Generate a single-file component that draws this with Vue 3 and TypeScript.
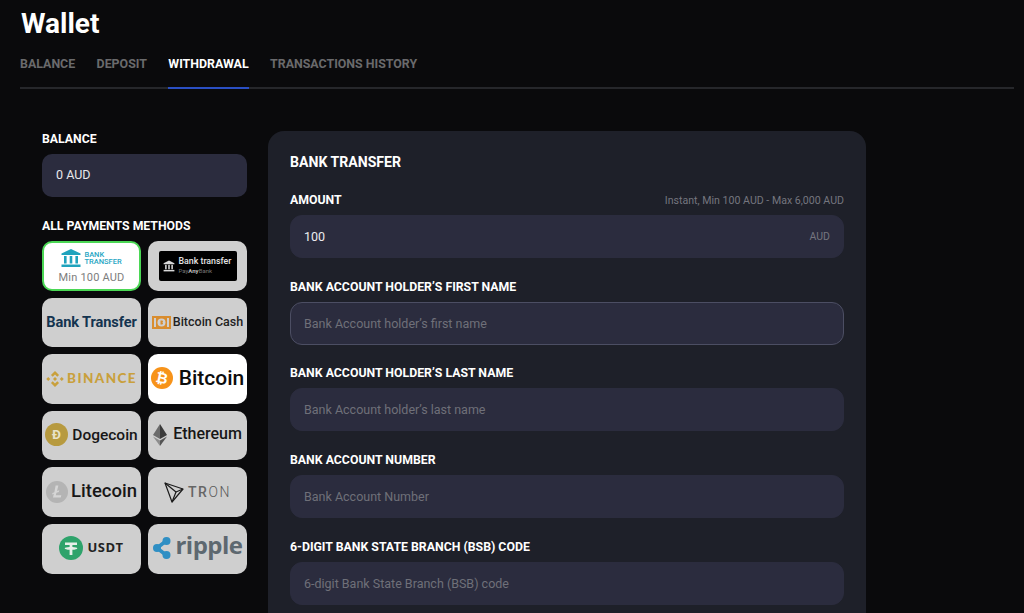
<script setup lang="ts">
const tabs = ['BALANCE', 'DEPOSIT', 'WITHDRAWAL', 'TRANSACTIONS HISTORY']
const fields = [
  { label: 'BANK ACCOUNT HOLDER’S FIRST NAME', hint: 'Bank Account holder’s first name', focus: true },
  { label: 'BANK ACCOUNT HOLDER’S LAST NAME', hint: 'Bank Account holder’s last name', focus: false },
  { label: 'BANK ACCOUNT NUMBER', hint: 'Bank Account Number', focus: false },
  { label: '6-DIGIT BANK STATE BRANCH (BSB) CODE', hint: '6-digit Bank State Branch (BSB) code', focus: false },
]
</script>

<template>
  <div class="page">
    <h1 class="title">Wallet</h1>
    <nav class="tabs">
      <span v-for="t in tabs" :key="t" class="tab" :class="{ active: t === 'WITHDRAWAL' }">{{ t }}</span>
    </nav>

    <div class="content">
      <aside class="side">
        <div class="side-label">BALANCE</div>
        <div class="balance">0 AUD</div>
        <div class="side-label methods-label">ALL PAYMENTS METHODS</div>
        <div class="grid">
          <div class="card selected">
            <div class="bt-row">
              <svg width="20" height="18" viewBox="0 0 20 18" fill="#1fa3bd">
                <path d="M10 0 19.5 4.6V6H.5V4.6Z" />
                <rect x="3" y="7" width="2.6" height="7.5" />
                <rect x="8.7" y="7" width="2.6" height="7.5" />
                <rect x="14.4" y="7" width="2.6" height="7.5" />
                <rect x=".5" y="15.5" width="19" height="2.5" />
              </svg>
              <span class="bt-text">BANK<br />TRANSFER</span>
            </div>
            <div class="min">Min 100 AUD</div>
          </div>

          <div class="card">
            <div class="pay-any">
              <svg width="12" height="12" viewBox="0 0 20 20" fill="#d8d8d8">
                <path d="M10 1 19 5.5V7H1V5.500Z" />
                <rect x="3.500" y="8" width="2.600" height="7.500" />
                <rect x="8.700" y="8" width="2.600" height="7.500" />
                <rect x="13.900" y="8" width="2.600" height="7.500" />
                <rect x="1" y="16.500" width="18" height="2.500" />
              </svg>
              <div class="pay-text">
                <div class="pay-a">Bank transfer</div>
                <div class="pay-b">Pay<b>Any</b>Bank</div>
              </div>
            </div>
          </div>

          <div class="card"><span class="bank-big">Bank Transfer</span></div>

          <div class="card row tight">
            <svg width="19" height="13" viewBox="0 0 19 13">
              <rect width="19" height="13" fill="#d98d2f" />
              <rect x="2" y="2" width="15" height="9" fill="#cfcfcf" />
              <rect x="4" y="0" width="11" height="13" fill="#d98d2f" />
              <circle cx="9.500" cy="6.500" r="4" fill="#cfcfcf" />
              <path d="M8.500 4.500h1.500a1 1 0 0 1 0 2a1 1 0 0 1 0 2H8.500Z" fill="#d98d2f" />
            </svg>
            <span class="bch">Bitcoin Cash</span>
          </div>

          <div class="card row binance">
            <svg width="18" height="18" viewBox="2 2 20 20" fill="#c9a03c">
              <path d="M12 3 16.500 7.500 14.500 9.500 12 7 9.500 9.500 7.500 7.500Z" />
              <path d="M12 21 7.500 16.500 9.500 14.500 12 17 14.500 14.500 16.500 16.500Z" />
              <path d="M4.500 9.800 6.700 12 4.500 14.200 2.300 12Z" />
              <path d="M19.500 9.800 21.700 12 19.500 14.200 17.300 12Z" />
              <path d="M12 9.800 14.200 12 12 14.200 9.800 12Z" />
            </svg>
            <span class="binance-text">BINANCE</span>
          </div>

          <div class="card white row lift">
            <svg width="22" height="22" viewBox="0 0 24 24">
              <circle cx="12" cy="12" r="12" fill="#f7931a" />
              <text x="12" y="17.500" text-anchor="middle" font-size="16" font-weight="700" fill="#fff" font-family="Roboto, sans-serif" transform="rotate(12 12 12)">₿</text>
            </svg>
            <span class="big-name btc">Bitcoin</span>
          </div>

          <div class="card row lift">
            <svg width="23" height="23" viewBox="0 0 24 24">
              <circle cx="12" cy="12" r="12" fill="#b79a3f" />
              <text x="12" y="17" text-anchor="middle" font-size="14" font-weight="700" fill="#e8e2c8" font-family="Roboto, sans-serif">Đ</text>
            </svg>
            <span class="name doge">Dogecoin</span>
          </div>

          <div class="card row lift">
            <svg width="14" height="22" viewBox="0 0 14 22">
              <path d="M7 0 14 11 7 15Z" fill="#3a3a3a" />
              <path d="M7 0 0 11 7 15Z" fill="#6b6b6b" />
              <path d="M7 16.500 14 12.500 7 22Z" fill="#555" />
              <path d="M7 16.500 0 12.500 7 22Z" fill="#8d8d8d" />
            </svg>
            <span class="name eth">Ethereum</span>
          </div>

          <div class="card row lite-row">
            <svg width="22" height="22" viewBox="0 0 24 24">
              <circle cx="12" cy="12" r="12" fill="#b4b4b4" />
              <path d="M10.500 5h3l-1.500 6 2.500-.8-.5 1.800-2.600.8-.7 2.700h6l-.6 2.500H7.600l1-4-2 .7.500-1.700 2-.7Z" fill="#d6d6d6" />
            </svg>
            <span class="name lite">Litecoin</span>
          </div>

          <div class="card row tron">
            <svg width="20" height="21" viewBox="0 0 20 21" fill="none" stroke="#1c1c1c" stroke-width="1.200" stroke-linejoin="round">
              <path d="M1 1 19 7 8 20Z" />
              <path d="M1 1 12 10 8 20" />
              <path d="M12 10 19 7" />
            </svg>
            <span class="tron-text"><span class="tron-bold">TR</span>ON</span>
          </div>

          <div class="card row usdt lift">
            <svg width="24" height="24" viewBox="0 0 24 24">
              <circle cx="12" cy="12" r="12" fill="#2ea36b" />
              <path d="M6 6.500h12v2.600h-4.600v2c2.700.1 4.900.6 4.900 1.300s-2.200 1.200-4.900 1.300V19h-2.800v-5.300c-2.700-.1-4.900-.6-4.900-1.300s2.200-1.200 4.900-1.300v-2H6Z" fill="#e6efe9" />
            </svg>
            <span class="usdt-text">USDT</span>
          </div>

          <div class="card row ripple lift">
            <svg width="20" height="23" viewBox="0 0 20 23">
              <path d="M5 12 14 5M5 12 14 19" fill="none" stroke="#2f8fc4" stroke-width="3.500" />
              <circle cx="14.500" cy="5" r="4" fill="#2f8fc4" />
              <circle cx="14.500" cy="19" r="4" fill="#2f8fc4" />
              <circle cx="5" cy="12" r="4" fill="#2f8fc4" />
            </svg>
            <span class="ripple-text">ripple</span>
          </div>
        </div>
      </aside>

      <section class="panel">
        <h2 class="panel-title">BANK TRANSFER</h2>
        <div class="field-head">
          <span class="label">AMOUNT</span>
          <span class="limits">Instant, Min 100 AUD - Max 6,000 AUD</span>
        </div>
        <div class="input amount">
          <span class="value">100</span>
          <span class="unit">AUD</span>
        </div>
        <div v-for="f in fields" :key="f.label" class="field">
          <div class="label">{{ f.label }}</div>
          <div class="input" :class="{ focus: f.focus }">
            <span class="hint">{{ f.hint }}</span>
          </div>
        </div>
      </section>
    </div>
  </div>
</template>

<style>
html, body { background: #0a0a0c; }
</style>

<style scoped>
.page {
  height: 613px;
  overflow: hidden;
  box-sizing: border-box;
  padding: 8px 10px 0 20px;
  background: #0a0a0c;
  font-family: Roboto, "Liberation Sans", sans-serif;
  color: #fff;
}
.title {
  margin: 0 0 0 1px;
  font-size: 28px;
  line-height: 31px;
  font-weight: 700;
  height: 31px;
}
.tabs {
  display: flex;
  gap: 21.4px;
  margin-top: 8px;
  border-bottom: 2px solid #26272b;
  height: 40px;
}
.tab {
  height: 42px;
  box-sizing: border-box;
  font-size: 12.4px;
  line-height: 30px;
  padding-top: 2px;
  font-weight: 700;
  color: #6a6a6c;
  border-bottom: 2px solid transparent;
}
.tab.active { color: #fff; border-bottom-color: #2a4fc4; }
.content {
  display: flex;
  gap: 21px;
  padding: 42px 0 0 22px;
}
.side { width: 205px; flex: none; padding-top: 1px; }
.side-label {
  font-size: 12.25px;
  line-height: 14px;
  font-weight: 700;
}
.balance {
  margin-top: 8px;
  height: 43px;
  border-radius: 10px;
  background: #2b2c3e;
  padding-left: 14px;
  font-size: 12.5px;
  line-height: 42px;
  color: #e8e8ec;
}
.methods-label { margin-top: 22px; }
.grid {
  margin-top: 8px;
  display: grid;
  grid-template-columns: 99px 99px;
  grid-auto-rows: 49.6px;
  gap: 7px;
}
.card {
  box-sizing: border-box;
  border-radius: 10px;
  background: #cfcfcf;
  display: flex;
  align-items: center;
  justify-content: center;
  overflow: hidden;
  color: #171717;
}
.card.white { background: #fff; }
.card.selected {
  background: #fff;
  border: 2px solid #4bd755;
  flex-direction: column;
}
.row { gap: 4px; }
.tight { gap: 2px; }
.lift svg { margin-bottom: 2px; }
.bt-row { display: flex; align-items: center; gap: 3px; margin-top: 1px; }
.bt-text {
  font-size: 7.5px;
  line-height: 7px;
  font-weight: 500;
  color: #27a6c3;
}
.min {
  font-size: 11px;
  line-height: 13px;
  margin-top: 4px;
  color: #7d7d7d;
  letter-spacing: .2px;
}
.pay-any {
  width: 78px;
  height: 30px;
  background: #000;
  border-radius: 2px;
  display: flex;
  align-items: center;
  gap: 4px;
  padding-left: 4px;
  box-sizing: border-box;
}
.pay-a { font-size: 8.8px; line-height: 11px; color: #e4e4e4; font-weight: 500; white-space: nowrap; }
.pay-b { font-size: 6px; line-height: 8px; color: #777; }
.pay-b b { color: #bbb; }
.bank-big {
  font-size: 14.6px;
  font-weight: 700;
  color: #14344f;
  white-space: nowrap;
  letter-spacing: -.1px;
}
.bch { font-size: 12.5px; font-weight: 500; white-space: nowrap; color: #222; margin-bottom: 2px; }
.binance { gap: 3px; }
.binance-text { font-size: 13.5px; font-weight: 900; letter-spacing: 1.4px; color: #c9a03c; font-family: Lato, sans-serif; margin-bottom: 2px; }
.big-name { font-size: 21px; font-weight: 500; white-space: nowrap; margin-bottom: 2px; }
.btc { color: #0c0c0c; margin-left: 2px; }
.name { font-size: 15.5px; font-weight: 500; white-space: nowrap; margin-bottom: 2px; }
.eth { font-size: 16px; margin-left: 2px; margin-bottom: 4px; }
.lite-row { gap: 3px; }
.lite { font-size: 18.5px; }
.tron { gap: 4px; }
.tron-text { font-size: 14px; color: #5a5a5a; letter-spacing: 1.6px; font-weight: 300; }
.tron-bold { font-weight: 500; color: #666; }
.usdt { gap: 4px; }
.usdt-text { font-size: 13px; font-weight: 700; color: #222; letter-spacing: .5px; font-family: "Open Sans", sans-serif; margin-bottom: 4px; }
.ripple { gap: 3px; }
.ripple-text { font-size: 24px; font-weight: 700; color: #5d6870; line-height: 26px; font-family: "Open Sans", sans-serif; letter-spacing: -.5px; padding-bottom: 7px; }

.panel {
  width: 598px;
  box-sizing: border-box;
  flex: none;
  background: #1e2029;
  border-radius: 16px;
  padding: 23px 22px 40px;
  height: 700px;
}
.panel-title {
  margin: 0;
  font-size: 14.1px;
  line-height: 16px;
  font-weight: 700;
}
.field-head {
  display: flex;
  justify-content: space-between;
  align-items: center;
  margin-top: 22px;
  height: 16px;
}
.label {
  font-size: 12.3px;
  line-height: 14px;
  font-weight: 700;
  white-space: nowrap;
}
.limits { font-size: 10.6px; color: #75767f; }
.input {
  box-sizing: border-box;
  margin-top: 8px;
  height: 43px;
  border-radius: 12px;
  background: #2b2c3e;
  border: 1px solid #2b2c3e;
  padding: 0 13px;
  display: flex;
  align-items: center;
  justify-content: space-between;
  font-size: 12.5px;
}
.input.amount { margin-top: 7px; }
.input.focus { border-color: #4c4e63; }
.value { color: #ececf0; }
.unit { font-size: 10.5px; color: #75767f; }
.hint { color: #6f7079; }
.field { margin-top: 21.67px; }
</style>
